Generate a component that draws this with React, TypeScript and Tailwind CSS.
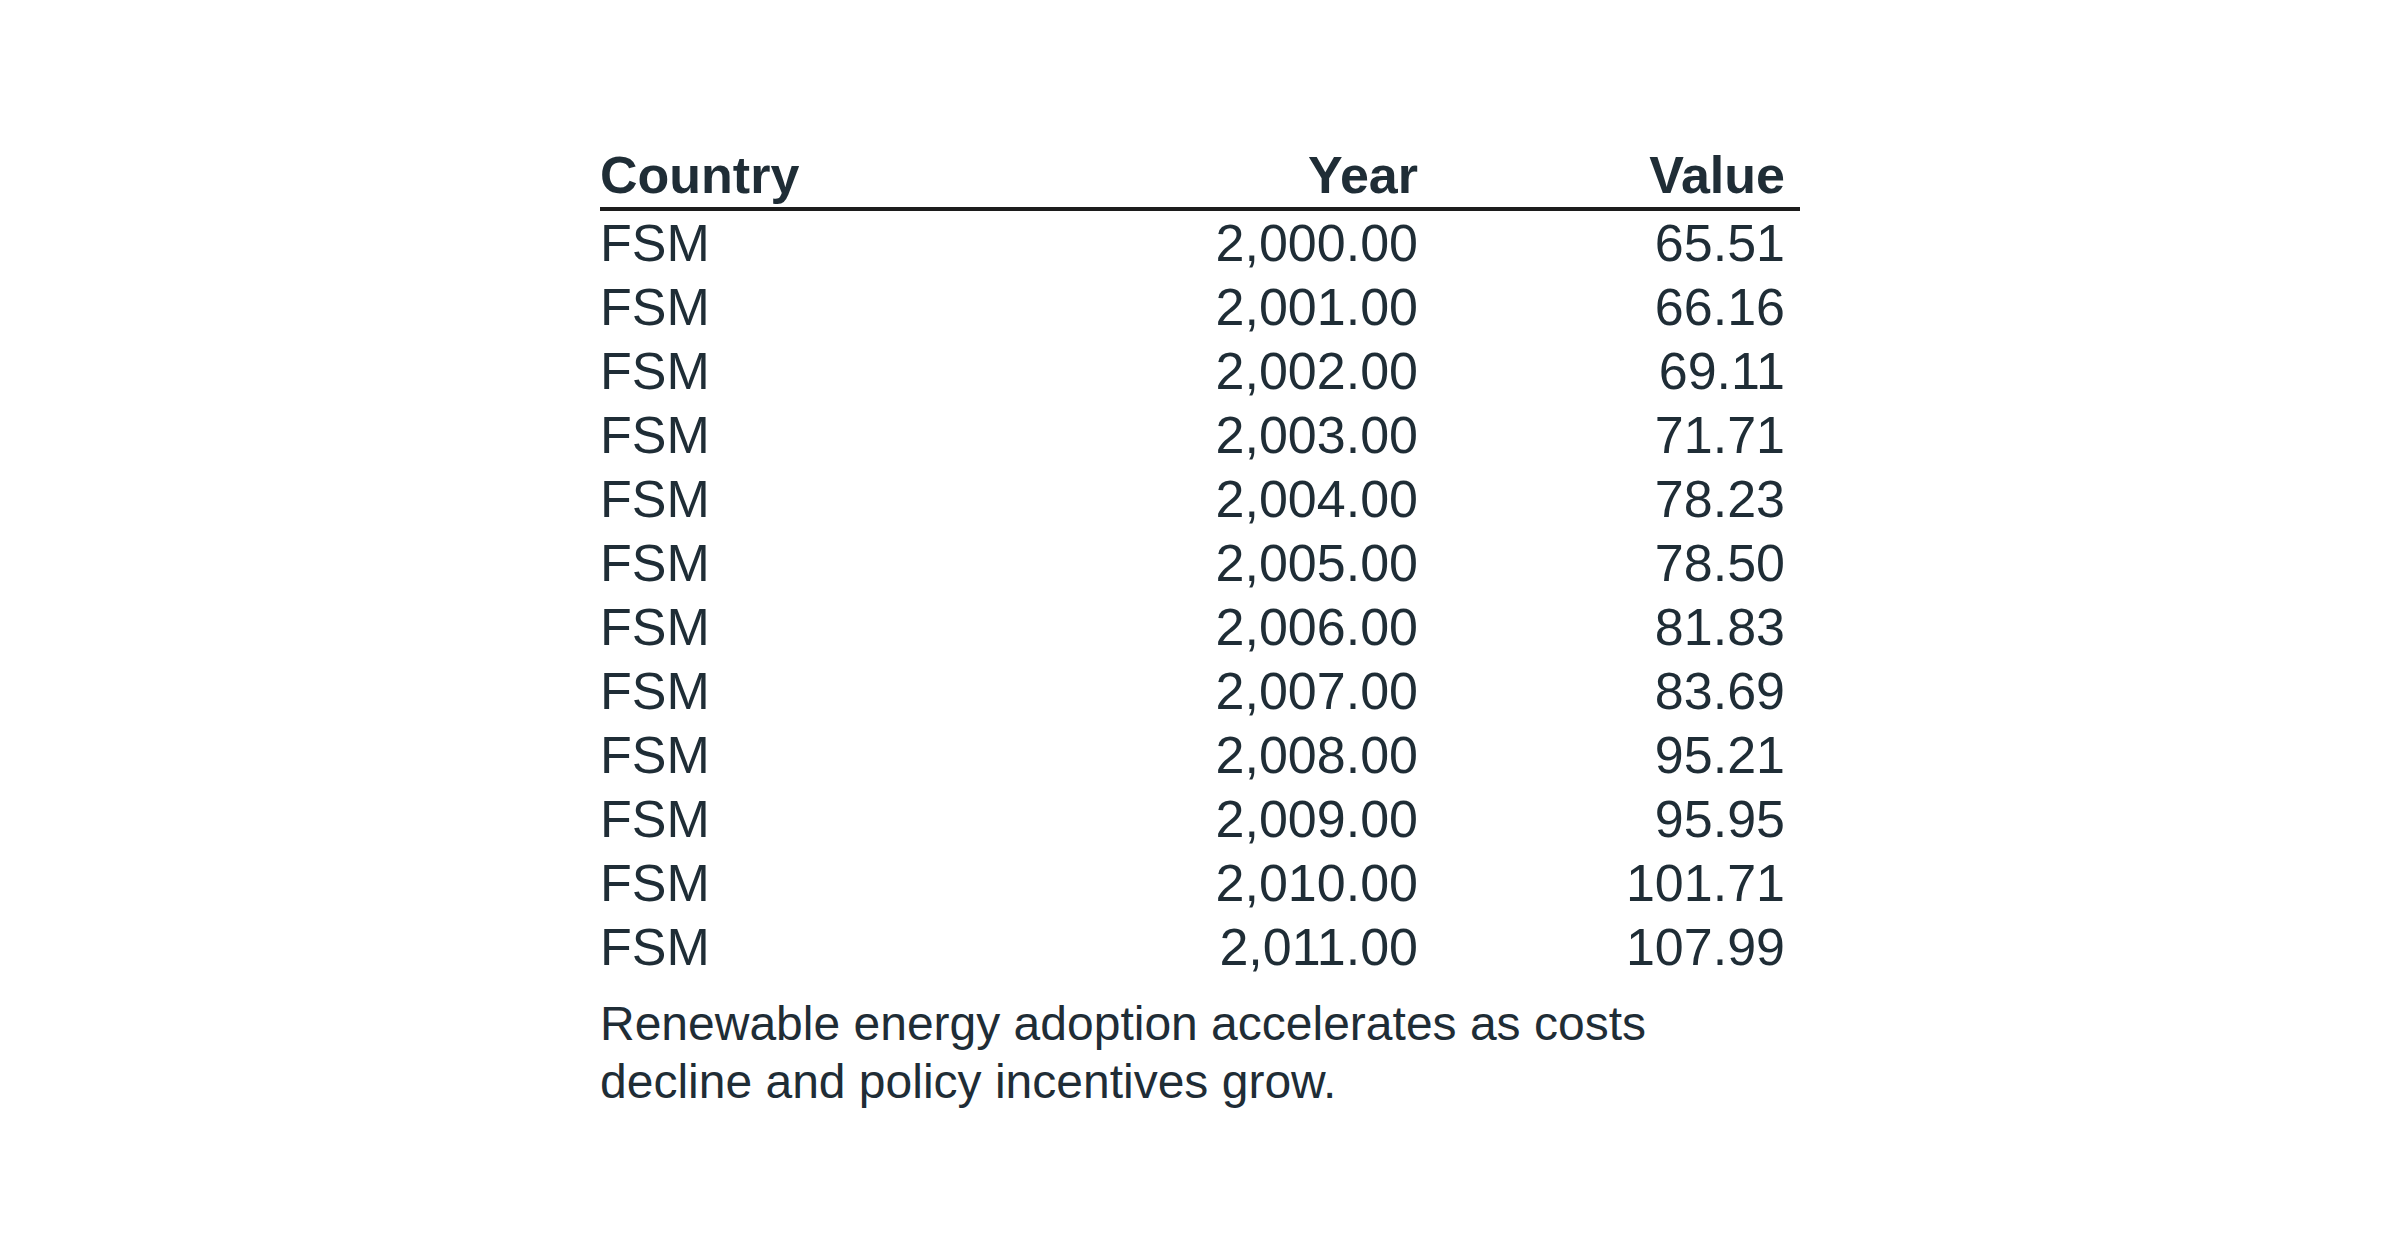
const rows = [
  ['FSM', '2,000.00', '65.51'],
  ['FSM', '2,001.00', '66.16'],
  ['FSM', '2,002.00', '69.11'],
  ['FSM', '2,003.00', '71.71'],
  ['FSM', '2,004.00', '78.23'],
  ['FSM', '2,005.00', '78.50'],
  ['FSM', '2,006.00', '81.83'],
  ['FSM', '2,007.00', '83.69'],
  ['FSM', '2,008.00', '95.21'],
  ['FSM', '2,009.00', '95.95'],
  ['FSM', '2,010.00', '101.71'],
  ['FSM', '2,011.00', '107.99'],
];

const App = () => {
  return (
    <div className="w-[2400px] h-[1256px] bg-white flex justify-center text-[#1f2d36] font-['Liberation_Sans',Arial,sans-serif]">
      <div className="w-[1200px] pt-[143px]">
        {/* Header */}
        <div className="flex text-[52px] leading-[64px] font-bold border-b-[4px] border-[#1c1c1c]">
          <div className="flex-1">Country</div>
          <div className="w-[400px] pr-[15px] text-right">Year</div>
          <div className="w-[367px] pr-[15px] text-right">Value</div>
        </div>

        {/* Body */}
        {rows.map(([country, year, value], i) => (
          <div key={i} className="flex text-[52px] leading-[64px]">
            <div className="flex-1">{country}</div>
            <div className="w-[400px] pr-[15px] text-right">{year}</div>
            <div className="w-[367px] pr-[15px] text-right">{value}</div>
          </div>
        ))}

        {/* Caption */}
        <p className="mt-[16px] text-[48px] leading-[58px]">
          Renewable energy adoption accelerates as costs decline and policy incentives grow.
        </p>
      </div>
    </div>
  );
};

export default App;
